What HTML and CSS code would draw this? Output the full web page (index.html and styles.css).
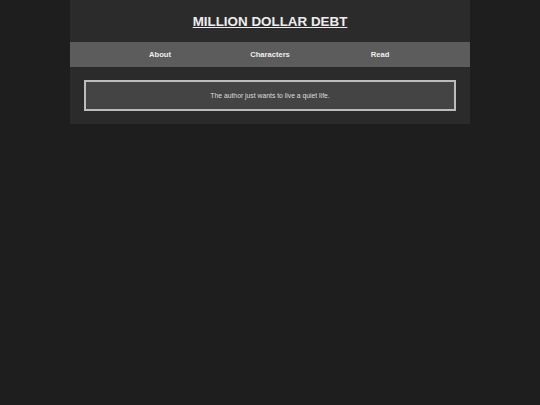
FILE: index.html
```html
<!DOCTYPE html>
<html lang="en">
<head>
    <meta charset="UTF-8">
    <meta name="viewport" content="width=device-width, initial-scale=1.0">
    <title>Million Dollar Debt</title>
    <link rel="stylesheet" href="styles.css">
</head>
<body>
    <div class="page">
        <header class="site-header">
            <h1 class="site-title">MILLION DOLLAR DEBT</h1>
        </header>

        <nav class="site-nav">
            <a href="#about">About</a>
            <a href="#characters">Characters</a>
            <a href="#read">Read</a>
        </nav>

        <main class="content">
            <div class="blurb">
                <p>The author just wants to live a quiet life.</p>
            </div>
        </main>
    </div>
</body>
</html>
```

FILE: styles.css
```css
/* Mise en page sombre, centrée */
body {
    margin: 0;
    background-color: #1e1e1e;
    font-family: "Liberation Sans", Arial, sans-serif;
    color: #eeeeee;
}

.page {
    width: 400px;
    margin: 0 auto;
    background-color: #2b2b2b;
}

.site-header {
    height: 42px;
    display: flex;
    align-items: center;
    justify-content: center;
}

.site-title {
    margin: 0;
    font-size: 13.4px;
    font-weight: bold;
    text-decoration: underline;
    color: #eeeeee;
}

.site-nav {
    display: grid;
    grid-template-columns: repeat(3, 1fr);
    height: 25px;
    padding: 0 35px;
    align-items: center;
    background-color: #5c5c5c;
}

.site-nav a {
    text-align: center;
    font-size: 7.6px;
    font-weight: bold;
    color: #eeeeee;
    text-decoration: none;
}

.content {
    padding: 13px 14px;
}

.blurb {
    height: 27px;
    display: flex;
    align-items: center;
    justify-content: center;
    background-color: #444444;
    border: 2px solid #bcbcbc;
}

.blurb p {
    margin: 0;
    font-size: 6.8px;
    color: #dddddd;
}
```
